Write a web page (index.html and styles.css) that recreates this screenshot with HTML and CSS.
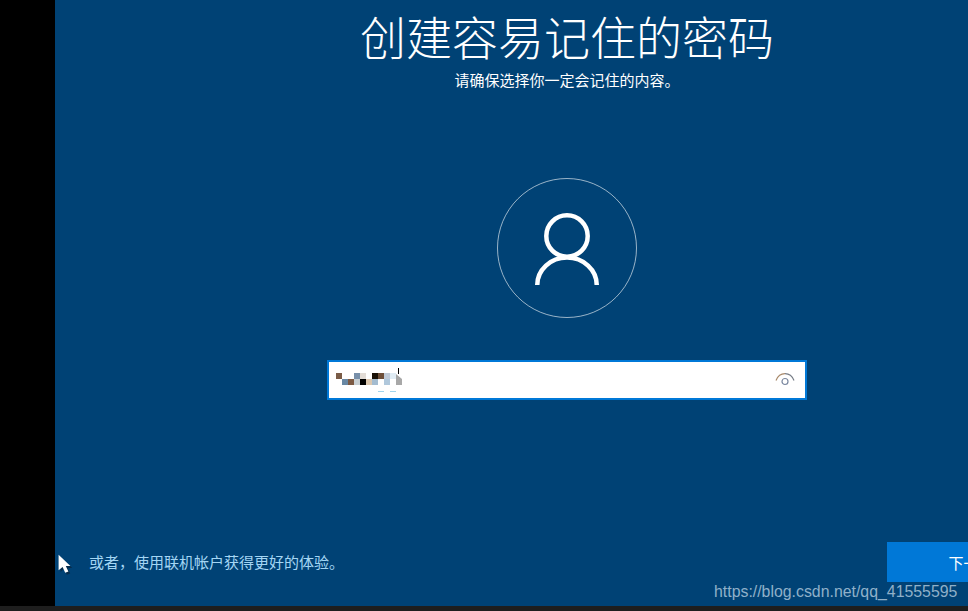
FILE: index.html
```html
<!DOCTYPE html>
<html lang="zh-CN">
<head>
  <meta charset="UTF-8">
  <title>创建容易记住的密码</title>
  <link rel="stylesheet" href="styles.css">
</head>
<body>
  <div class="screen">
    <div class="side"></div>
    <div class="main">
      <h1 class="title">创建容易记住的密码</h1>
      <p class="sub">请确保选择你一定会记住的内容。</p>

      <div class="avatar">
        <svg width="138" height="138" viewBox="1 1 138 138" fill="none" stroke="#fff" stroke-width="4.5">
          <circle cx="70" cy="58" r="20.7"/>
          <path d="M40.25 107A29.75 27.5 0 0 1 99.75 107"/>
        </svg>
      </div>

      <div class="inp_wrap">
        <svg class="mosaic" width="70" height="28" viewBox="0 0 70 28">
          <rect x="0" y="6" width="6" height="6" fill="#7a5c48"/>
          <rect x="18" y="6" width="6" height="6" fill="#7890aa"/>
          <rect x="24" y="6" width="6" height="6" fill="#e2dcd6"/>
          <rect x="36" y="6" width="6" height="6" fill="#1a1208"/>
          <rect x="42" y="6" width="6" height="6" fill="#6e4f38"/>
          <rect x="48" y="6" width="6" height="6" fill="#c0cad6"/>
          <rect x="54" y="6" width="6" height="6" fill="#e0ecf4"/>
          <path d="M60 7l6 5h-6z" fill="#a8a8a8"/>
          <rect x="6" y="12" width="6" height="6" fill="#6888a4"/>
          <rect x="12" y="12" width="6" height="6" fill="#7c5a44"/>
          <rect x="18" y="12" width="6" height="6" fill="#c8d0d4"/>
          <rect x="24" y="12" width="6" height="6" fill="#000"/>
          <rect x="30" y="12" width="6" height="6" fill="#dcc8b0"/>
          <rect x="36" y="12" width="6" height="6" fill="#a4bcd0"/>
          <rect x="48" y="12" width="6" height="6" fill="#b0c8dc"/>
          <rect x="60" y="12" width="6" height="6" fill="#a8a8a8"/>
          <rect x="42" y="24" width="6" height="1" fill="#a0d4ec"/>
          <rect x="54" y="24" width="6" height="1" fill="#a0d4ec"/>
          <rect x="62" y="1" width="1" height="6" fill="#000"/>
        </svg>
        <svg class="eye" width="20" height="16" viewBox="0 0 20 16" fill="none" stroke-width="1.2">
          <path d="M1 8.5C3 3.5 6 1.7 10 1.7" stroke="#a8896a"/>
          <path d="M10 1.7C14 1.7 17 3.5 19 8.5" stroke="#767c86"/>
          <circle cx="10" cy="9.5" r="3" stroke="#7a88a0"/>
        </svg>
      </div>

      <div class="bottom">
        <a class="link">或者，使用联机帐户获得更好的体验。</a>
        <button class="btn">下一步</button>
      </div>
    </div>
  </div>
  <div class="bar"></div>

  <svg class="cursor" width="17" height="23" viewBox="0 0 17 23">
    <path d="M2.5 3V18L6.2 14.8 8.8 20.8 12.2 19.4 9.6 14H14.2Z" fill="#0c1c28" opacity=".55"/>
    <path d="M.6 .8V16.2L4.6 12.9 7.2 18.8 10.4 17.4 7.8 12H12.4Z" fill="#fff"/>
  </svg>
  <span class="mark">https://blog.csdn.net/qq_41555595</span>
</body>
</html>
```

FILE: styles.css
```css
* {
  box-sizing: border-box;
}

html, body {
  height: 100%;
  margin: 0;
  overflow: hidden;
}

body {
  display: flex;
  flex-direction: column;
  background-color: #000;
  font-family: "Noto Sans CJK SC", "Liberation Sans", sans-serif;
}

.screen {
  display: flex;
  flex: 1;
  min-height: 0;
}

.side {
  width: 55px;
  flex-shrink: 0;
  background-color: #000;
}

.main {
  width: 1024px;
  flex-shrink: 0;
  display: flex;
  flex-direction: column;
  align-items: center;
  background-color: #004275;
  color: #fff;
}

.title {
  margin: 5px 0 0;
  font-size: 46px;
  line-height: 60px;
  font-weight: 300;
}

.sub {
  margin: 5px 0 0;
  font-size: 15px;
  line-height: 20px;
}

.avatar {
  width: 140px;
  height: 140px;
  margin-top: 88px;
  border: 1px solid rgba(255,255,255,.6);
  border-radius: 50%;
}

.avatar svg {
  display: block;
}

.inp_wrap {
  width: 480px;
  height: 40px;
  margin-top: 42px;
  padding: 0 10px 0 7px;
  display: flex;
  align-items: center;
  justify-content: space-between;
  background-color: #fff;
  border: 2px solid #0078d7;
}

.mosaic {
  margin-top: 2px;
}

.eye {
  margin-top: -1px;
}

.bottom {
  width: 100%;
  margin-top: auto;
  margin-bottom: 24px;
  padding: 0 24px 0 34px;
  display: flex;
  align-items: center;
  justify-content: space-between;
}

.link {
  margin-bottom: 2px;
  font-size: 15px;
  color: #a4d6f4;
}

.btn {
  width: 168px;
  height: 40px;
  border: none;
  background-color: #0078d7;
  color: #fff;
  font-family: inherit;
  font-size: 15px;
}

.bar {
  height: 5px;
  flex-shrink: 0;
  background-color: #1e1e1e;
}

.cursor {
  position: absolute;
  left: 58px;
  top: 554px;
}

.mark {
  position: absolute;
  left: 714px;
  top: 582px;
  font-family: "Liberation Sans", sans-serif;
  font-size: 15.87px;
  line-height: 20px;
  color: #8fb0c9;
}
```
